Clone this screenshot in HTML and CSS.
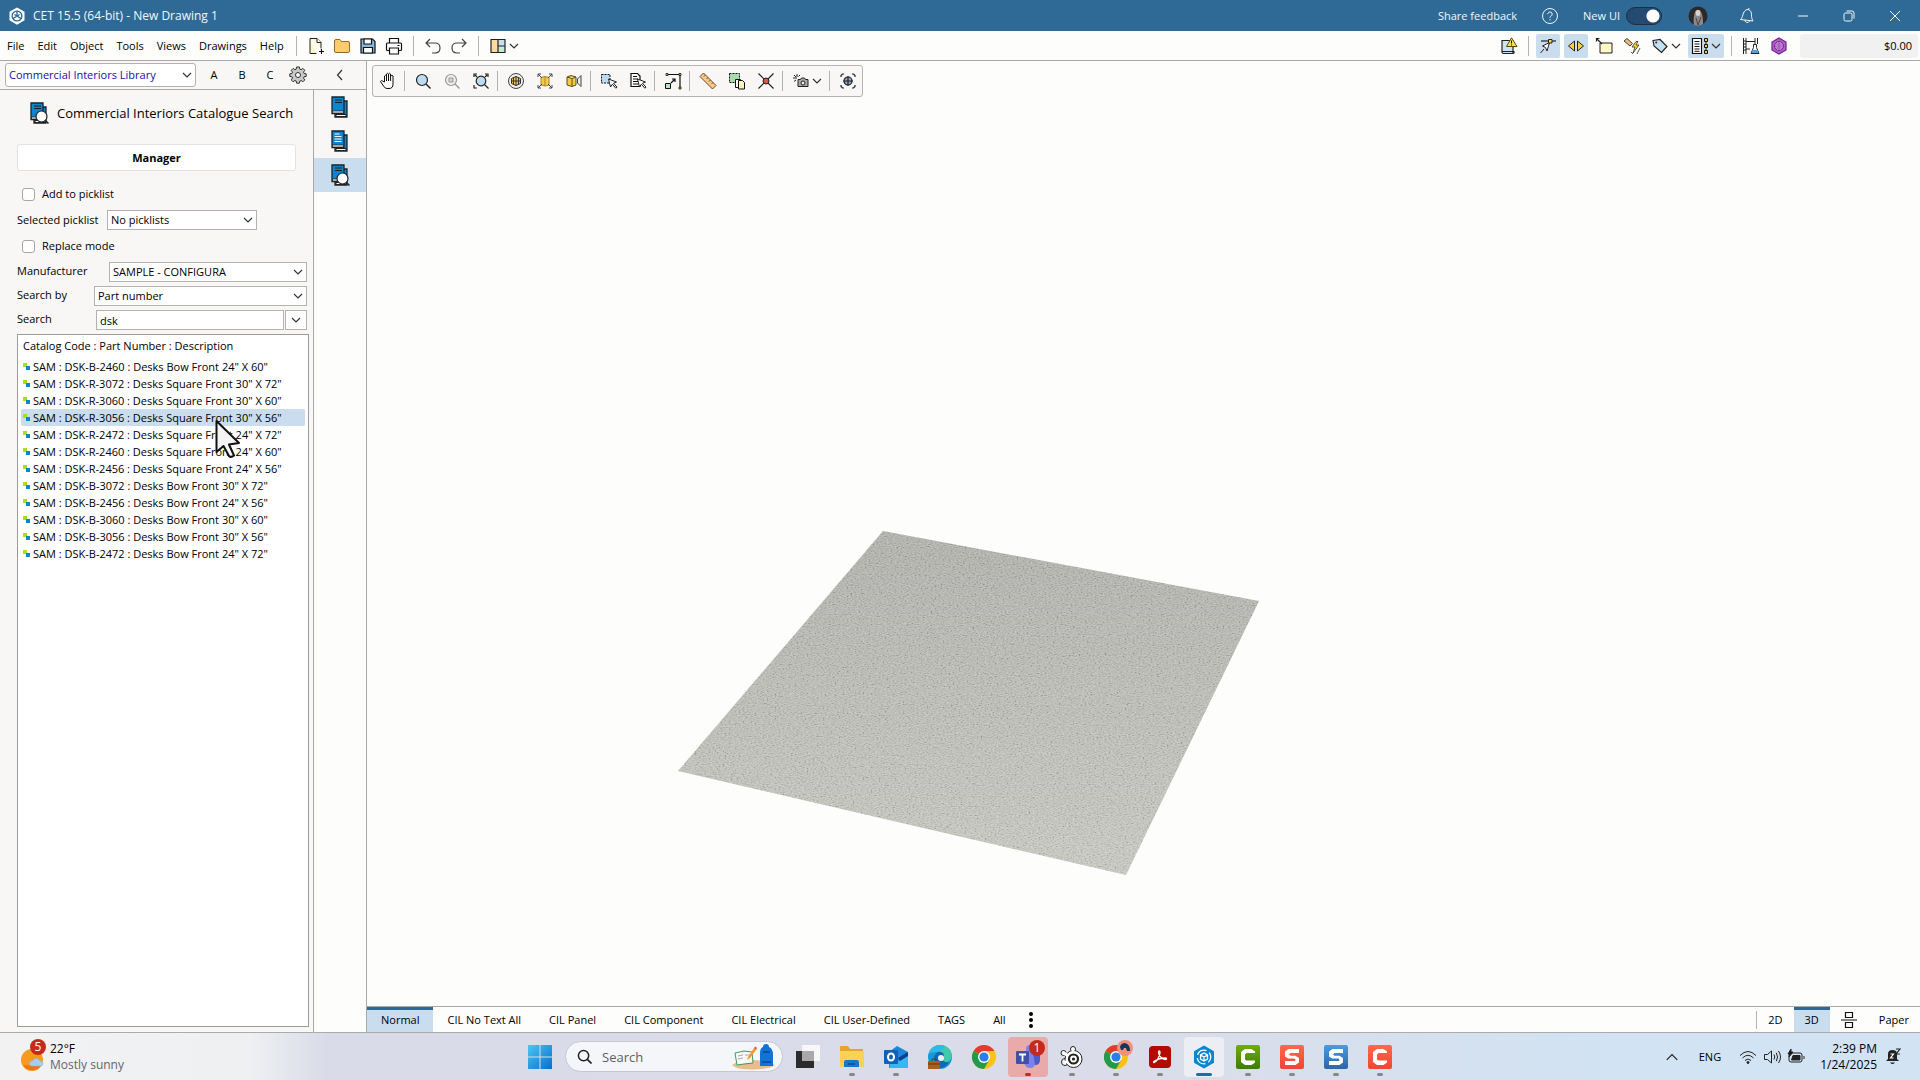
FILE: index.html
```html
<!DOCTYPE html>
<html lang="en">
<head>
  <meta charset="UTF-8" />
  <meta name="viewport" content="width=device-width, initial-scale=1.0"/>
  <title>CET 15.5 (64-bit) - New Drawing 1</title>
  <link rel="stylesheet" href="styles.css">
</head>
<body>
  <!-- shared icons -->
  <svg class="defs" aria-hidden="true">
    <symbol id="chevron" viewBox="0 0 10 10"><path d="M1 3l4 4 4-4" fill="none" stroke="#333" stroke-width="1.2"/></symbol>
    <symbol id="book" viewBox="0 0 24 24">
      <path d="M8 6h11v16H7v-3" fill="#0a86d1" stroke="#222" stroke-width="1.3"/>
      <path d="M8 19.500h10v2H8z" fill="#fff" stroke="#222" stroke-width="1"/>
      <path d="M4 2h12v16.500H4z" fill="#0a86d1" stroke="#222" stroke-width="1.3"/>
      <path d="M4.500 16h11v2h-11z" fill="#fff" stroke="#222" stroke-width="0.800"/>
    </symbol>
    <symbol id="book-search" viewBox="0 0 24 24">
      <use href="#book"/>
      <path d="M7 5h7M7 7.500h7" stroke="#122" stroke-width="1"/>
      <circle cx="14.500" cy="15.500" r="5.500" fill="#fff" stroke="#222" stroke-width="1.2"/>
      <path d="M18.500 19.500l3 3" stroke="#222" stroke-width="1.5"/>
    </symbol>
    <symbol id="item" viewBox="0 0 8 8"><path d="M0 0h4v4H0z" fill="#a8e010"/><path d="M3 3h4v4H3z" fill="#0a86d1"/></symbol>
    <symbol id="chrome" viewBox="0 0 24 24">
      <circle cx="12" cy="12" r="12" fill="#fbc116"/>
      <path d="M12 12L1.600 6A12 12 0 0 1 22.400 6H12z" fill="#e33b2e"/>
      <path d="M12 12L1.600 6A12 12 0 0 0 12 24l5.200-9z" fill="#229a4a"/>
      <circle cx="12" cy="12" r="6" fill="#fff"/><circle cx="12" cy="12" r="4.600" fill="#2b7de9"/>
    </symbol>
    <symbol id="cube" viewBox="0 0 24 24">
      <path d="M12 .5l10 5.700v11.600l-10 5.700-10-5.700V6.200z" fill="currentColor"/>
      <g fill="none" stroke="#fff" stroke-width="1.3"><circle cx="12" cy="12" r="6.800" stroke-dasharray="11 3.200" stroke-dashoffset="5"/><path d="M12 8l3.500 2v4L12 16l-3.500-2v-4zM8.500 10l3.500 2 3.500-2M12 12v4"/></g>
    </symbol>
    <symbol id="camtasia-c" viewBox="0 0 24 24"><path d="M19 6.500L15.500 4H9L5 7v10l4 3h6.500l3.500-2.500v-2H10.500L9 14.500v-5L10.500 8H19z" fill="#fff"/></symbol>
    <symbol id="snagit-s" viewBox="0 0 24 24"><path d="M19 4v4h-8.500L9 9.500l1.500 1.300h5L19 13v4.500L15.500 20H5v-4h9.500l1.200-1-1.200-1.500H8L5 11.500v-5L8.500 4z" fill="#fff"/></symbol>
  </svg>

  <header class="titlebar">
    <svg class="app-logo" viewBox="0 0 24 24"><path d="M12 .5l10 5.700v11.600l-10 5.700-10-5.700V6.200z" fill="#fff"/><g fill="none" stroke="#2f6a96" stroke-width="1.800"><circle cx="12" cy="12" r="6.500"/><path d="M12 5v7l-5.500 3.500M12 12l5.500 3.500M8.500 10l3.500 2 3.500-2"/></g></svg>
    <h1>CET 15.5 (64-bit) - New Drawing 1</h1>
    <div class="title-tools">
      <a href="#" class="feedback">Share feedback</a>
      <button class="help" aria-label="Help"><svg viewBox="0 0 18 18"><circle cx="9" cy="9" r="7.500"/><path d="M6.800 7.200a2.200 2.200 0 1 1 3.400 1.800c-.9.600-1.200.9-1.200 1.900M9 12.200v1.200"/></svg></button>
      <label class="new-ui">New UI <input type="checkbox" role="switch" checked></label>
      <button class="avatar" aria-label="Account"><svg viewBox="0 0 20 20"><circle cx="10" cy="10" r="9.500" fill="#2a2829"/><path d="M6 19c-1-5 0-10 1-13 1-3 5-3 6 0 2 4 2 8 2 12-3 2-6 2-9 1z" fill="#8d8988"/><ellipse cx="10" cy="7" rx="2.300" ry="3" fill="#d8d2cf"/><path d="M8 12l2 7 3-8" fill="none" stroke="#4a4646"/></svg></button>
      <button class="bell" aria-label="Notifications"><svg viewBox="0 0 18 18"><path d="M2.500 12.500c2-1.500 2-4 3-6.500s3.200-4 5.200-3.300 2.800 2.800 2.800 5c0 2 .2 4 1.500 6.300zM7 13c0 3 4 3.500 4.500.7M10.500 2.500l.5-1.500"/></svg></button>
      <button class="win" aria-label="Minimize"><svg viewBox="0 0 12 12"><path d="M1 6h10"/></svg></button>
      <button class="win" aria-label="Restore"><svg viewBox="0 0 12 12"><rect x="1" y="3" width="8" height="8" rx="1.500"/><path d="M3.500 1H9a2 2 0 0 1 2 2v5.500"/></svg></button>
      <button class="win" aria-label="Close"><svg viewBox="0 0 12 12"><path d="M1 1l10 10M11 1L1 11"/></svg></button>
    </div>
  </header>

  <div class="menubar">
    <nav class="menus">
      <button>File</button><button>Edit</button><button>Object</button><button>Tools</button><button>Views</button><button>Drawings</button><button>Help</button>
    </nav>
    <div class="file-tools">
      <span class="sep"></span>
      <button aria-label="New"><svg viewBox="0 0 18 18"><path d="M3 1.500h7l4 4v6M9.500 16.500H3v-15" fill="#fff6d0" stroke="#222"/><path d="M10 1.500v4h4" fill="#fff" stroke="#222"/><path d="M12 14.500h5M14.500 12v5" stroke="#111" stroke-width="1.200"/></svg></button>
      <button aria-label="Open"><svg viewBox="0 0 18 18"><path d="M1.500 4q0-1.500 1.500-1.500h4l1.500 2H15q1.500 0 1.500 1.500v8q0 1.500-1.500 1.500H3q-1.500 0-1.500-1.500z" fill="#ffcb6b" stroke="#96692a"/></svg></button>
      <button aria-label="Save"><svg viewBox="0 0 18 18"><path d="M2 2h11.500L16 4.500V16H2z" fill="#8ab8de" stroke="#111" stroke-width="1.200"/><path d="M5 2h7.500v5H5zM4.500 10.500h9V16h-9z" fill="#fff" stroke="#111" stroke-width="1.200"/></svg></button>
      <button aria-label="Print"><svg viewBox="0 0 18 18"><g fill="#fff" stroke="#111" stroke-width="1.200"><path d="M4.500 6V1.500h9V6"/><rect x="1.500" y="6" width="15" height="7.500" rx="1"/><path d="M4.500 11h9v6h-9zM12.500 8.500h2"/></g></svg></button>
      <span class="sep"></span>
      <button aria-label="Undo"><svg viewBox="0 0 18 18"><path d="M6 2L2 6l4 4M2 6h9q5 0 5 5t-5 5H8" fill="none" stroke="#444" stroke-width="1.200"/></svg></button>
      <button aria-label="Redo"><svg viewBox="0 0 18 18"><path d="M12 2l4 4-4 4M16 6H7q-5 0-5 5t5 5h3" fill="none" stroke="#444" stroke-width="1.200"/></svg></button>
      <span class="sep"></span>
      <button class="drop" aria-label="Layout"><svg viewBox="0 0 18 18"><path d="M2 2.500h7v13H2z" fill="#ffd9a0"/><path d="M9 2.500h7v6.500H9z" fill="#c8dff0"/><path d="M9 9h7v6.500H9z" fill="#c5ecd2"/><path d="M2 2.500h14v13H2zM9 2.500v13M9 9h7" fill="none" stroke="#222" stroke-width="1.200"/></svg><svg class="chev"><use href="#chevron"/></svg></button>
    </div>
    <div class="mode-tools">
      <button aria-label="Catalogue warnings"><svg viewBox="0 0 18 18"><path d="M2 3.500h11v13H3.500q-1.500 0-1.500-1.500zM2 14.500h12v2" fill="#cfe2f1" stroke="#222" stroke-width="1.200"/><path d="M11.500.8L17 9.500H6.500z" fill="#ffdf4f" stroke="#554a10"/><path d="M11.500 3.500v3M11.500 7.500v1" stroke="#111"/></svg></button>
      <span class="sep"></span>
      <button class="on" aria-label="Snap"><svg viewBox="0 0 18 18"><path d="M2 4h15" stroke="#222" stroke-width="1.200"/><path d="M1.500 16l3.500-4M3.500 9l7-3.500L8 14l-1.500-3.500z" fill="#fff" stroke="#222"/><path d="M9.500 2.500h3.500v3.500H9.500z" fill="#ffd34a" stroke="#222"/></svg></button>
      <button class="on" aria-label="Stretch"><svg viewBox="0 0 18 18"><path d="M7.500 4v10l-6-5zM10.500 4v10l6-5z" fill="#ffcf3a" stroke="#222"/></svg></button>
      <button aria-label="Note"><svg viewBox="0 0 18 18"><path d="M5 6h12v10H5z" fill="#fff8c8" stroke="#222"/><path d="M1.500 4.500v-3h3M1.500 1.500L7 7" fill="none" stroke="#222" stroke-width="1.200"/></svg></button>
      <button aria-label="Power"><svg viewBox="0 0 18 18"><path d="M1 4l3-2.500 5.500 5L7 9z" fill="#f0b97a" stroke="#444"/><path d="M13 4.500l-4 5.500h3l-2 6 6-8h-3l2-3.500zM8 15l2 2M17 11l-3 6" fill="#ffd22e" stroke="#333" stroke-width="0.800"/></svg></button>
      <button class="drop" aria-label="Tags"><svg viewBox="0 0 18 18"><path d="M2 3.500l7-1 7 7-5.500 6L3 9z" fill="#c5dff2" stroke="#222" stroke-width="1.200"/><circle cx="5.200" cy="5.500" r="1" fill="#222"/></svg><svg class="chev"><use href="#chevron"/></svg></button>
      <button class="drop on" aria-label="Tree list"><svg viewBox="0 0 18 18"><path d="M1.500 1.500h9v15h-9z" fill="#fff" stroke="#111" stroke-width="1.200"/><path d="M3.500 4.500h5M3.500 7h5M3.500 9.500h5M3.500 12h5M3.500 14.300h5" stroke="#111"/><path d="M15 2v14" stroke="#111"/><path d="M13.500 1.500h3v3h-3zM13.500 7.500h3v3h-3zM13.500 13.500h3v3h-3z" fill="#ffcf3a" stroke="#111"/></svg><svg class="chev"><use href="#chevron"/></svg></button>
      <span class="sep"></span>
      <button aria-label="Lab"><svg viewBox="0 0 18 18"><path d="M1.500 1v16M4 1v16M1.500 4h2.500M1.500 7h2.500M1.500 10h2.500M1.500 13h2.500M4 4.500h9M4 12h4M13 1v6M15.500 1v6" fill="none" stroke="#222"/><path d="M11.500 7.500h3v3l2.500 6H9l2.500-6z" fill="#fff" stroke="#222"/><path d="M10.500 13h5l1 3h-7z" fill="#5b9bd0"/></svg></button>
      <button aria-label="Material"><svg viewBox="0 0 18 18"><path d="M9 1l7 4v8l-7 4-7-4V5z" fill="#b45bd0" stroke="#6d2487" stroke-width="1.200"/><circle cx="9" cy="9" r="4.500" fill="#d7a4e6" stroke="#6d2487"/><path d="M9 4.500v9M4.500 9h9M5.500 7h7M5.500 11h7" stroke="#87409f" stroke-width="0.800"/></svg></button>
      <output class="price">$0.00</output>
    </div>
  </div>

  <main class="workspace">
    <aside class="sidebar">
      <div class="library-bar">
        <div class="pick library">
          <select aria-label="Library"><option>Commercial Interiors Library</option></select>
          <svg><use href="#chevron"/></svg>
        </div>
        <button>A</button><button>B</button><button>C</button>
        <button aria-label="Settings"><svg viewBox="0 0 18 18"><path d="M7.600 1h2.800l.4 2.200 1.300.5L14 2.400 15.800 4.300l-1.300 1.800.5 1.300 2.200.4v2.600l-2.200.4-.5 1.300 1.300 1.800-1.900 1.900-1.800-1.300-1.300.5-.4 2.200H7.600l-.4-2.200-1.300-.5-1.800 1.300-1.900-1.900 1.300-1.800-.5-1.300L.8 10.400V7.800L3 7.400l.5-1.300-1.300-1.800L4.100 2.400l1.800 1.300 1.300-.5z" fill="#c9c9c9" stroke="#333"/><circle cx="9" cy="9" r="2.500" fill="#fff" stroke="#333"/></svg></button>
        <button class="collapse" aria-label="Collapse"><svg viewBox="0 0 10 12"><path d="M7 1L2.500 6 7 11" fill="none" stroke="#333" stroke-width="1.200"/></svg></button>
      </div>
      <div class="sidebar-body">
        <section class="panel">
          <h2><svg><use href="#book-search"/></svg>Commercial Interiors Catalogue Search</h2>
          <button class="manager">Manager</button>
          <form class="search-form">
            <label class="check"><input type="checkbox">Add to picklist</label>
            <div class="field">
              <label for="picklist">Selected picklist</label>
              <div class="pick short"><select id="picklist"><option>No picklists</option></select><svg><use href="#chevron"/></svg></div>
            </div>
            <label class="check"><input type="checkbox">Replace mode</label>
            <div class="field">
              <label for="manufacturer" class="w-manufacturer">Manufacturer</label>
              <div class="pick"><select id="manufacturer"><option>SAMPLE - CONFIGURA</option></select><svg><use href="#chevron"/></svg></div>
            </div>
            <div class="field">
              <label for="search-by" class="w-by">Search by</label>
              <div class="pick"><select id="search-by"><option>Part number</option></select><svg><use href="#chevron"/></svg></div>
            </div>
            <div class="field">
              <label for="search" class="w-search">Search</label>
              <input type="text" id="search" value="dsk">
              <button type="button" class="history" aria-label="Search history"><svg><use href="#chevron"/></svg></button>
            </div>
          </form>
          <div class="results">
            <p>Catalog Code : Part Number : Description</p>
            <ul>
              <li><svg><use href="#item"/></svg>SAM : DSK-B-2460 : Desks Bow Front 24" X 60"</li>
              <li><svg><use href="#item"/></svg>SAM : DSK-R-3072 : Desks Square Front 30" X 72"</li>
              <li><svg><use href="#item"/></svg>SAM : DSK-R-3060 : Desks Square Front 30" X 60"</li>
              <li class="selected"><svg><use href="#item"/></svg>SAM : DSK-R-3056 : Desks Square Front 30" X 56"</li>
              <li><svg><use href="#item"/></svg>SAM : DSK-R-2472 : Desks Square Front 24" X 72"</li>
              <li><svg><use href="#item"/></svg>SAM : DSK-R-2460 : Desks Square Front 24" X 60"</li>
              <li><svg><use href="#item"/></svg>SAM : DSK-R-2456 : Desks Square Front 24" X 56"</li>
              <li><svg><use href="#item"/></svg>SAM : DSK-B-3072 : Desks Bow Front 30" X 72"</li>
              <li><svg><use href="#item"/></svg>SAM : DSK-B-2456 : Desks Bow Front 24" X 56"</li>
              <li><svg><use href="#item"/></svg>SAM : DSK-B-3060 : Desks Bow Front 30" X 60"</li>
              <li><svg><use href="#item"/></svg>SAM : DSK-B-3056 : Desks Bow Front 30" X 56"</li>
              <li><svg><use href="#item"/></svg>SAM : DSK-B-2472 : Desks Bow Front 24" X 72"</li>
            </ul>
            <svg class="pointer" viewBox="0 0 26 40"><path d="M1.500 2v31l7-6 5.500 10q2 2 5-.5l-5-11 10-1.500z" fill="#f4f4f4" stroke="#111" stroke-width="2" stroke-linejoin="round"/></svg>
          </div>
        </section>
        <nav class="rail">
          <button aria-label="Catalogues"><svg viewBox="0 0 24 24"><use href="#book"/><path d="M7 5h7M7 7.500h7" stroke="#122"/></svg></button>
          <button aria-label="Catalogue pages"><svg viewBox="0 0 24 24"><use href="#book"/><path d="M6.500 5h5M6.500 7.500h7M6.500 10h7M6.500 12.500h7" stroke="#fff"/></svg></button>
          <button class="on" aria-label="Catalogue search"><svg><use href="#book-search"/></svg></button>
        </nav>
      </div>
    </aside>

    <section class="view">
      <div class="canvas">
        <svg class="scene" viewBox="0 0 1553 945" preserveAspectRatio="xMinYMin slice" role="img" aria-label="Floor">
          <defs>
            <linearGradient id="floor" x1="0" y1="0" x2="0" y2="1"><stop offset="0" stop-color="#b0b1ab"/><stop offset="1" stop-color="#c9cac3"/></linearGradient>
            <clipPath id="floor-shape"><path d="M516 470l376 70-133 274-448-104z"/></clipPath>
            <filter id="weave" x="0" y="0" width="1" height="1"><feTurbulence type="fractalNoise" baseFrequency="0.5 0.9" numOctaves="2" seed="4"/><feColorMatrix values="2 0 0 0 -.45  2 0 0 0 -.45  2 0 0 0 -.45  0 0 0 0 1"/></filter>
          </defs>
          <g clip-path="url(#floor-shape)">
            <rect x="311" y="470" width="581" height="344" fill="url(#floor)"/>
            <rect x="311" y="470" width="581" height="344" filter="url(#weave)" opacity="0.180"/>
          </g>
        </svg>
        <div class="view-tools">
          <button aria-label="Pan"><svg viewBox="0 0 18 18"><path d="M5.500 10V4q1-1.500 2 0V2q1-1.500 2 0v0q1-1.500 2 0v2q1.500-1.500 2.500 0V12q0 4.500-4 4.500H8q-2 0-3.500-2.500L1.500 9.500q.5-1.500 2-.5zM7.500 4v5M9.500 2v7M11.600 3v6" fill="#fff" stroke="#111"/></svg></button>
          <span class="sep"></span>
          <button aria-label="Zoom"><svg viewBox="0 0 18 18"><circle cx="8" cy="8" r="5.500" fill="#bcdaf2" stroke="#222" stroke-width="1.200"/><path d="M12 12l4.500 4.500" stroke="#222" stroke-width="1.400"/></svg></button>
          <button disabled aria-label="Zoom selection"><svg viewBox="0 0 18 18"><circle cx="8" cy="8" r="5.500" fill="#eee" stroke="#999" stroke-width="1.200"/><path d="M6 6h4v4H6z" fill="#cfd8d0" stroke="#999"/><path d="M12 12l4.500 4.500" stroke="#999" stroke-width="1.400"/></svg></button>
          <button aria-label="Zoom extents"><svg viewBox="0 0 18 18"><circle cx="9" cy="9" r="4.800" fill="#bcdaf2" stroke="#222" stroke-width="1.200"/><path d="M12.500 12.500l4 4M2 5V2h3M13 2h3v3M2 13v3h3M3 3l2 2M15 3l-2 2" fill="none" stroke="#222" stroke-width="1.200"/></svg></button>
          <span class="sep"></span>
          <button aria-label="Orbit"><svg viewBox="0 0 18 18"><circle cx="9" cy="9" r="7.500" fill="#eee" stroke="#444"/><path d="M4.500 6.500l4.500-2 4.500 2v5l-4.500 2-4.500-2z" fill="#f7ca45" stroke="#333"/><path d="M9 4v10M4 9h10M6.500 5.500v7M11.500 5.500v7" stroke="#333"/></svg></button>
          <button aria-label="Fit view"><svg viewBox="0 0 18 18"><path d="M5 5.500l4-1 4 1V13l-4 1-4-1zM9 5v9" fill="#f7ca45" stroke="#a8872a"/><path d="M2 5V2h3M13 2h3v3M2 13v3h3M13 16h3v-3M2 2l4 4M16 2l-4 4M2 16l4-4M16 16l-4-4" fill="none" stroke="#444"/></svg></button>
          <button aria-label="Section view"><svg viewBox="0 0 18 18"><path d="M2 5l4-1.500L11 5v8l-4 1.500L2 13zM2 5l5 1.500L11 5M7 6.500v8" fill="#f7ca45" stroke="#5f4e1a"/><path d="M16 3.500v11l-3.500-3.500V7z" fill="#eee" stroke="#444"/></svg></button>
          <span class="sep"></span>
          <button aria-label="Select area"><svg viewBox="0 0 18 18"><path d="M1.500 2.500h8.500v8.500H1.500z" fill="#bcdaf2" stroke="#111" stroke-dasharray="2 1"/><path d="M8.500 7l8 3-3 1.200 3.500 4-1.200 1-3.500-4L10.500 15z" fill="#fff" stroke="#222"/></svg></button>
          <button aria-label="Select from list"><svg viewBox="0 0 18 18"><path d="M2 1.500h6.500L11 4v10.500H2z" fill="#fff" stroke="#111" stroke-width="1.200"/><path d="M4 4.500h4M4 7h5M4 9.500h5M4 12h5" stroke="#111"/><path d="M8.500 7l8 3-3 1.200 3.500 4-1.200 1-3.500-4L10.500 15z" fill="#fff" stroke="#222"/></svg></button>
          <span class="sep"></span>
          <button aria-label="Stretch"><svg viewBox="0 0 18 18"><path d="M3 2.500h13V16M7 11l4-4M8 7h3v3" fill="none" stroke="#111" stroke-width="1.200"/><path d="M1.500 11.500h5v5h-5z" fill="#b5e5c0" stroke="#111"/><path d="M2 1.500h2v2H2zM15 1.500h2v2h-2zM15 15h2v2h-2z" fill="#f7ca45" stroke="#111" stroke-width="0.800"/></svg></button>
          <span class="sep"></span>
          <button aria-label="Measure"><svg viewBox="0 0 18 18"><path d="M1 4.500L4.500 1 17 13.500 13.500 17z" fill="#f9c98b" stroke="#6b4a25"/><path d="M6.500 3L5 4.500M9 5.500L7.500 7M11.500 8L10 9.500M14 10.500L12.500 12" stroke="#6b4a25"/></svg></button>
          <button aria-label="Copy"><svg viewBox="0 0 18 18"><path d="M1.500 1.500h10v9h-10z" fill="#a6dcae" stroke="#111" stroke-dasharray="2 1"/><path d="M7.500 7.500h5v8h-5z" fill="#fff" stroke="#111"/><path d="M10.500 8.500h4l2 2V17h-6z" fill="#fff6b5" stroke="#111"/></svg></button>
          <button aria-label="Delete point"><svg viewBox="0 0 18 18"><path d="M1.500 1.500l15 15M16.500 1.500l-15 15" stroke="#222" stroke-width="1.200"/><circle cx="9" cy="9" r="3" fill="#d85443" stroke="#222"/></svg></button>
          <span class="sep"></span>
          <button class="drop" aria-label="Render"><svg viewBox="0 0 18 18"><path d="M6 7.500h2.500l1-1.500h3l1 1.500H16v7H6z" fill="#aaa" stroke="#222"/><circle cx="11" cy="11" r="2" fill="#eee" stroke="#222"/><path d="M5 2v3M2 3l2 2M8 3L6.500 4.500M1 6h4M2 9.500L4 8" stroke="#222"/></svg><svg class="chev"><use href="#chevron"/></svg></button>
          <span class="sep"></span>
          <button aria-label="Focus"><svg viewBox="0 0 18 18"><circle cx="9" cy="9" r="4" fill="#8fa7c0" stroke="#222" stroke-width="1.200"/><path d="M9 4v10M4 9h10M2 5V3.500L3.500 2H5M13 2h1.500L16 3.500V5M2 13v1.500L3.500 16H5M13 16h1.500l1.500-1.500V13" fill="none" stroke="#222" stroke-width="1.200"/></svg></button>
        </div>
      </div>
      <nav class="view-tabs">
        <button class="on">Normal</button><button>CIL No Text All</button><button>CIL Panel</button><button>CIL Component</button><button>CIL Electrical</button><button>CIL User-Defined</button><button>TAGS</button><button>All</button>
        <button class="more" aria-label="More"><svg viewBox="0 0 6 18"><circle cx="3" cy="3" r="2"/><circle cx="3" cy="9" r="2"/><circle cx="3" cy="15" r="2"/></svg></button>
        <div class="modes">
          <button>2D</button><button class="on">3D</button>
          <button class="split" aria-label="Split view"><svg viewBox="0 0 16 18"><path d="M0 9h16M4.500 1.500h7v5h-7zM4.500 11.500h7v5h-7z" fill="none" stroke="#111" stroke-width="1.200"/></svg></button>
          <button>Paper</button>
        </div>
      </nav>
    </section>
  </main>

  <footer class="taskbar">
    <button class="weather">
      <svg viewBox="0 0 28 28"><circle cx="12" cy="17" r="11" fill="#f59a1c"/><path d="M3 22a11 11 0 0 0 18 1z" fill="#f2750f"/><path d="M12 23q-3-.5-2.500-3t3-2q1-3 4-2.500t3.500 2.500q3 0 3 2.500T20.500 23z" fill="#a9cdf2" stroke="#8db5e2" stroke-width="0.600"/></svg>
      <span class="badge">5</span>
      <span class="weather-text"><b>22°F</b><i>Mostly sunny</i></span>
    </button>
    <div class="apps">
      <button class="start" aria-label="Start"><svg viewBox="0 0 24 24"><defs><linearGradient id="win" x1="0" y1="0" x2="1" y2="1"><stop offset="0" stop-color="#4bc6f2"/><stop offset="1" stop-color="#0570d0"/></linearGradient></defs><path d="M0 0h11.500v11.500H0zM12.500 0H24v11.500H12.500zM0 12.500h11.500V24H0zM12.500 12.500H24V24H12.500z" fill="url(#win)"/></svg></button>
      <label class="search">
        <svg viewBox="0 0 16 16"><circle cx="7" cy="7" r="5.500" fill="none" stroke="#222" stroke-width="1.600"/><path d="M11 11l4.500 4.500" stroke="#222" stroke-width="1.800"/></svg>
        <input type="text" placeholder="Search" aria-label="Search">
        <svg class="art" viewBox="0 0 44 26"><path d="M0 21q8-6 22-5t21 5q-4 4-21 4.500T0 21z" fill="#e9bd8b"/><path d="M3 9l9-2 8 1 1 11-9 1-7 1z" fill="#f8f8f8" stroke="#3d9a63"/><path d="M6 12l5-1M6 15l5-1M13 11l5 0" stroke="#aaa"/><path d="M22 4l-6 9-1 3 3-2 6-8z" fill="#f39a2b"/><path d="M22 4l2 2 1-2-1.500-1.500z" fill="#e3503c"/><path d="M28 22V9q0-5 3-6 0-3 3-3t3 3q3 1 4 6v13z" fill="#1272d6"/><path d="M31 8h7M30 18h9" stroke="#0a4797" stroke-width="1.500"/></svg>
      </label>
      <button class="app" aria-label="Task view"><svg viewBox="0 0 24 24"><path d="M0 6h18v17H0z" fill="#2b2b2b"/><path d="M6 0h18v16H6z" fill="#fafafa" opacity="0.900"/><path d="M6 6h12v10H6z" fill="#a9a9ab"/></svg></button>
      <button class="app running" aria-label="File Explorer"><svg viewBox="0 0 24 24"><path d="M0 2q0-1 1-1h7l2 3h13v5H0z" fill="#e5a526"/><path d="M0 6h24v15q0 1-1 1H1q-1 0-1-1z" fill="#fcd15a"/><path d="M4 22v-5q0-2 2-2h11q2 0 2 2v5z" fill="#1778c8"/><path d="M8 19h7" stroke="#0b4f94" stroke-width="1.500"/></svg></button>
      <button class="app running" aria-label="Outlook"><svg viewBox="0 0 24 24"><path d="M5 7l8-6 11 6v15q0 1-1 1H6q-1 0-1-1z" fill="#1c87d6"/><path d="M5 10l10 6 9-7v13q0 1-1 1H6z" fill="#35b8f1"/><path d="M14 13l10-6v4l-8 5z" fill="#0f3f8c"/><rect y="5" width="14" height="14" rx="1" fill="#0f62b9"/><ellipse cx="7" cy="12" rx="3" ry="3.500" fill="none" stroke="#fff" stroke-width="2"/></svg></button>
      <button class="app" aria-label="Edge"><svg viewBox="0 0 24 24"><circle cx="12" cy="12" r="12" fill="#1598d8"/><path d="M1 8C4 0 16-3 22 5c4 6 1 12-4 12-4 0-5-2-3-4 1-2-1-6-5-6-3 0-7 0-9 1z" fill="#42c9a9"/><path d="M1 8C3 1 11-2 17 1c-2 4-6 6-8 6s-6 0-8 1z" fill="#2fb9e6"/><path d="M6 12q2-6 7-5c4 1 3 5 2 6-1 2 1 5 6 4q-3 6-10 6-5-3-5-11z" fill="#1566b8"/><circle cx="13" cy="13" r="3" fill="#e9f3fa"/><path d="M0 16h12v8H0z" fill="#a85f1c"/><path d="M0 19h12M4 16v-2h4v2" fill="none" stroke="#6a3707"/></svg></button>
      <button class="app" aria-label="Chrome"><svg><use href="#chrome"/></svg></button>
      <button class="app alert running" aria-label="Teams"><svg viewBox="0 0 24 24"><circle cx="14" cy="4" r="4" fill="#7b83eb"/><path d="M8 8h12v9q-1 6-6 6t-6-6z" fill="#7b83eb"/><path d="M17 8h7v7q0 5-5 5z" fill="#5059c9"/><rect y="6" width="13" height="13" rx="1" fill="#4150a8"/><path d="M3 9.500h7M6.500 9.500v7" stroke="#fff" stroke-width="1.800"/></svg><span class="badge">1</span></button>
      <button class="app running" aria-label="SteelSeries"><svg viewBox="0 0 24 24"><g fill="#fff" stroke="#222"><circle cx="3.500" cy="8" r="2.500"/><circle cx="13" cy="4" r="2.500"/><circle cx="5" cy="17" r="3.500"/><circle cx="13.500" cy="14" r="8.500"/></g><path d="M4 8l4 3M13 4v4M5 17h4" stroke="#fff" stroke-width="3"/><circle cx="13.500" cy="14" r="4.500" fill="#fff" stroke="#222" stroke-width="2.200"/><circle cx="13.500" cy="14" r="1.600" fill="#222"/></svg></button>
      <button class="app running" aria-label="Chrome profile"><svg viewBox="0 0 24 24" overflow="visible"><use href="#chrome"/><circle cx="21" cy="3" r="8" fill="#f0917c"/><path d="M16 2q1-4 5-4 5 1 5 8h-3l-1-3-2 0-1 2h-2z" fill="#12365c"/></svg></button>
      <button class="app running" aria-label="Acrobat"><svg viewBox="0 0 24 24"><rect x="1" y="1" width="22" height="22" rx="4" fill="#b30b00"/><path d="M6 17.500c2 0 6-6 6-10 0-2-1.500-2-1.500 0 0 3 4 7 7 7 1.500 0 1.500-1.500-.5-1.500-4 0-8 1.500-10.500 3-1 .5-1 1.500-.5 1.500z" fill="none" stroke="#fff" stroke-width="1.300"/></svg></button>
      <button class="app active" aria-label="CET"><svg><use href="#cube"/></svg></button>
      <button class="app running green" aria-label="Camtasia"><svg><use href="#camtasia-c"/></svg></button>
      <button class="app running red" aria-label="Snagit"><svg><use href="#snagit-s"/></svg></button>
      <button class="app running blue" aria-label="Snagit Editor"><svg><use href="#snagit-s"/></svg></button>
      <button class="app running red" aria-label="Camtasia Recorder"><svg><use href="#camtasia-c"/></svg></button>
    </div>
    <div class="tray">
      <button aria-label="Show hidden icons"><svg class="up" viewBox="0 0 12 12"><path d="M1.500 8.500L6 4l4.500 4.500"/></svg></button>
      <span class="lang">ENG</span>
      <button class="status" aria-label="Network, sound and power">
        <svg viewBox="0 0 18 18"><path d="M1 7.500q8-8 16 0M3.500 10q5.500-5.500 11 0M6 12.500q3-3 6 0"/><circle cx="9" cy="14.500" r="1" fill="#222"/></svg>
        <svg viewBox="0 0 18 18"><path d="M1.500 6.500h3l4-3.500v12l-4-3.500h-3zM11 6.500q1.500 2.500 0 5M13.300 4.800q2.500 4.200 0 8.400M15.500 3q4 6 0 12"/></svg>
        <svg viewBox="0 0 18 18"><rect x="2" y="5" width="13" height="9" rx="2" /><path d="M6 7.500h7v4.500H4.500z" fill="#222"/><path d="M17 8v3"/><path d="M4 1L1 6h2L2 9l4-5H4z" fill="#111"/></svg>
      </button>
      <time datetime="2025-01-24T14:39"><span>2:39 PM</span><span>1/24/2025</span></time>
      <button aria-label="Do not disturb"><svg class="dnd" viewBox="0 0 16 18"><path d="M1 13l2-2V6q0-4 4.500-4T12 6v5l2 2zM5 14.500h5q-2.500 3-5 0z" fill="#222"/><path d="M5.500 6h3l-3 4h3" stroke="#fff" stroke-width="1.200"/><path d="M11 1h4l-4 5h4" stroke="#222" stroke-width="1.200"/></svg></button>
    </div>
  </footer>
</body>
</html>
```
FILE: styles.css
```css
* {
  box-sizing: border-box;
}

body {
  margin: 0;
  height: 100vh;
  display: flex;
  flex-direction: column;
  overflow: hidden;
  font-family: "Open Sans", "Noto Sans", sans-serif;
  font-size: 11px;
  line-height: 16px;
  color: #000;
  background: #fdfdfc;
}

button,
select,
input {
  margin: 0;
  padding: 0;
  border: none;
  background: none;
  font: inherit;
  color: inherit;
}

button {
  display: flex;
  align-items: center;
  justify-content: center;
  flex-shrink: 0;
  white-space: nowrap;
}

svg {
  display: block;
  flex-shrink: 0;
}

.defs {
  position: absolute;
  width: 0;
  height: 0;
}

.chev {
  width: 10px;
  height: 10px;
}

/* title bar */

.titlebar {
  display: flex;
  align-items: center;
  height: 31px;
  flex-shrink: 0;
  padding: 0 2px 0 8px;
  background: #2f6a96;
  color: #f2f6fa;
}

.app-logo {
  width: 18px;
  height: 18px;
}

.titlebar h1 {
  margin: 0 auto 0 7px;
  font-size: 12px;
  font-weight: 400;
}

.title-tools {
  display: flex;
  align-items: center;
}

.titlebar svg {
  fill: none;
  stroke: #f2f6fa;
}

.titlebar .app-logo,
.avatar svg {
  stroke: none;
}

.feedback {
  color: inherit;
  text-decoration: none;
  margin-right: 24px;
}

.help svg,
.bell svg {
  width: 18px;
  height: 18px;
}

.new-ui {
  display: flex;
  align-items: center;
  gap: 6px;
  margin-left: 24px;
}

.new-ui input {
  appearance: none;
  width: 36px;
  height: 18px;
  border: 1px solid #1b2f45;
  border-radius: 9px;
  background: radial-gradient(circle at 26px 8px, #fff 6px, transparent 7px) #254a72;
}

.avatar {
  margin: 0 30px 0 26px;
}

.avatar svg {
  width: 20px;
  height: 20px;
}

.bell {
  margin-right: 24px;
}

.win {
  width: 46px;
  height: 31px;
}

.win svg {
  width: 12px;
  height: 12px;
}

/* menu bar */

.menubar {
  display: flex;
  align-items: center;
  height: 30px;
  flex-shrink: 0;
  border-bottom: 1px solid #aaa9a9;
  background: #fdfdfc;
}

.menus {
  display: flex;
  gap: 13px;
  padding: 0 12px 0 7px;
}

.file-tools,
.mode-tools {
  display: flex;
  align-items: center;
}

.mode-tools {
  margin-left: auto;
  gap: 4px;
}

.sep {
  width: 1px;
  height: 20px;
  background: #b4b2b2;
}

.menubar .mode-tools .sep {
  margin: 0 3px;
}

.menubar .file-tools .sep {
  margin: 0 6px;
}

.menubar .file-tools .sep:first-child {
  margin-left: 0;
}

.file-tools button {
  width: 26px;
  height: 24px;
}

.menubar svg,
.view-tools svg {
  width: 18px;
  height: 18px;
}

.menubar .chev,
.view-tools .chev {
  width: 10px;
  height: 10px;
}

.file-tools .drop {
  width: 38px;
  gap: 2px;
}

.mode-tools button {
  width: 24px;
  height: 24px;
}

.mode-tools .drop {
  width: 36px;
  gap: 2px;
}

.mode-tools .on {
  background: #c9ddee;
  border-radius: 2px;
}

.price {
  width: 118px;
  margin: 0 2px 0 5px;
  padding: 4px 6px;
  border-radius: 3px;
  background: #f1f1f1;
  text-align: right;
}

/* sidebar */

.workspace {
  flex: 1;
  display: flex;
  min-height: 0;
}

.sidebar {
  width: 367px;
  display: flex;
  flex-direction: column;
  border-right: 1px solid #aaa9a9;
  background: #f8f7f6;
}

.library-bar {
  display: flex;
  align-items: center;
  height: 29px;
  padding-left: 5px;
  border-bottom: 1px solid #aaa9a9;
}

.library-bar button {
  width: 28px;
  height: 24px;
}

.library-bar button svg {
  width: 18px;
  height: 18px;
}

.library-bar .collapse {
  margin-left: 14px;
}

.library-bar .collapse svg {
  width: 10px;
  height: 12px;
}

/* a select with its own arrow laid over the right end */
.pick {
  display: grid;
  flex: 1;
  align-items: center;
}

.pick select,
.pick svg {
  grid-area: 1 / 1;
}

.pick select {
  appearance: none;
  width: 100%;
  height: 20px;
  padding: 0 20px 0 3px;
  border: 1px solid #b5b0b2;
  background: #fff;
}

.pick svg {
  justify-self: end;
  width: 10px;
  height: 10px;
  margin-right: 4px;
  pointer-events: none;
}

.library {
  flex: none;
  width: 191px;
  margin-right: 4px;
}

.library select {
  height: 24px;
  border-radius: 3px;
  color: #1a0da5;
}

.sidebar-body {
  flex: 1;
  display: flex;
  min-height: 0;
}

.panel {
  flex: 1;
  display: flex;
  flex-direction: column;
  padding: 10px 4px 5px 17px;
}

.panel h2 {
  display: flex;
  align-items: center;
  gap: 6px;
  margin: 0 0 18px 10px;
  font-size: 13px;
  font-weight: 400;
  line-height: 26px;
  white-space: nowrap;
}

.panel h2 svg {
  width: 24px;
  height: 24px;
}

.manager {
  height: 27px;
  margin: 0 13px 13px 0;
  border: 1px solid #e3e1e1;
  border-radius: 3px;
  background: #fff;
  font-weight: 700;
}

.search-form {
  display: flex;
  flex-direction: column;
  margin-right: 2px;
}

.check {
  display: flex;
  align-items: center;
  gap: 7px;
  height: 20px;
  padding-left: 5px;
}

.check input {
  appearance: none;
  width: 13px;
  height: 13px;
  border: 1px solid #a8a5a5;
  border-radius: 3px;
  background: #fff;
}

.field {
  display: flex;
  align-items: center;
  height: 24px;
}

.check + .field {
  margin-top: 4px;
}

.field + .check {
  margin-top: 4px;
}

.field label {
  width: 90px;
  white-space: nowrap;
}

.field .w-manufacturer,
.field .w-by,
.field .w-search {
  padding-bottom: 3px;
}

.field .w-manufacturer {
  width: 92px;
}

.field .w-by {
  width: 77px;
}

.field .w-search {
  width: 79px;
}

.pick.short {
  flex: none;
  width: 150px;
}

.field input {
  flex: 1;
  min-width: 0;
  height: 20px;
  padding: 0 3px;
  border: 1px solid #b5b0b2;
  background: #fff;
}

.history {
  width: 22px;
  height: 20px;
  margin-left: 1px;
  border: 1px solid #b5b0b2;
  background: #fff;
}

.history svg {
  width: 10px;
  height: 10px;
}

.results {
  position: relative;
  flex: 1;
  margin-top: 2px;
  border: 1px solid #9c9a9b;
  background: #fff;
  padding: 3px;
}

.results p {
  margin: 0 0 4px 2px;
}

.results ul {
  margin: 0;
  padding: 0;
  list-style: none;
}

.results li {
  display: flex;
  align-items: center;
  gap: 2px;
  height: 17px;
  padding-left: 2px;
  white-space: nowrap;
}

.results li svg {
  width: 8px;
  height: 8px;
}

.results .selected {
  background: #c9ddee;
  border-radius: 2px;
}

.pointer {
  position: absolute;
  left: 197px;
  top: 84px;
  width: 26px;
  height: 40px;
}

.rail {
  width: 53px;
  border-left: 1px solid #aaa9a9;
  background: #fdfdfc;
}

.rail button {
  width: 52px;
  height: 34px;
  background: #f8f7f6;
}

.rail button svg {
  width: 24px;
  height: 24px;
}

.rail .on {
  background: #c9ddee;
}

/* drawing view */

.view {
  flex: 1;
  min-width: 0;
  display: flex;
  flex-direction: column;
}

.canvas {
  flex: 1;
  min-height: 0;
  display: grid;
  align-items: start;
  justify-items: start;
}

.scene,
.view-tools {
  grid-area: 1 / 1;
}

.scene {
  width: 100%;
  height: 100%;
}

.view-tools {
  display: flex;
  align-items: center;
  height: 32px;
  margin: 4px 5px;
  border: 1px solid #b4b2b2;
  border-radius: 3px;
  background: #f8f7f6;
}

.view-tools button {
  width: 29px;
  height: 30px;
}

.view-tools .sep {
  margin: 0 3px 0 2px;
}

.view-tools .drop {
  width: 41px;
  gap: 2px;
}

.view-tabs {
  display: flex;
  height: 26px;
  border-top: 1px solid #aaa9a9;
}

.view-tabs button {
  padding: 0 14px;
  border-top: 3px solid transparent;
  border-bottom: 3px solid transparent;
}

.view-tabs .on {
  border-top-color: #2f6a96;
  border-bottom-color: #c9ddee;
  background: #c9ddee;
}

.view-tabs .more {
  padding: 0 8px;
}

.view-tabs .more svg {
  width: 6px;
  height: 18px;
}

.modes {
  display: flex;
  align-items: center;
  margin-left: auto;
}

.modes::before {
  content: "";
  width: 1px;
  height: 18px;
  background: #b4b2b2;
}

.view-tabs .modes button {
  height: 25px;
  padding: 0 11px;
}

.modes .split svg {
  width: 16px;
  height: 18px;
}

/* taskbar */

.taskbar {
  display: grid;
  grid-template-columns: 1fr auto 1fr;
  align-items: center;
  height: 48px;
  flex-shrink: 0;
  border-top: 1px solid #a9abad;
  background: linear-gradient(90deg, #f2f2f3 0, #eef0f2 13%, #d9dce8 17%, #dadde9 60%, #d2e3f3 84%, #d2e3f3 100%);
  font-size: 12px;
}

.weather {
  position: relative;
  justify-self: start;
  gap: 2px;
  padding-left: 20px;
}

.weather svg {
  width: 28px;
  height: 28px;
}

.weather-text {
  display: flex;
  flex-direction: column;
  text-align: left;
}

.weather-text b,
.weather-text i {
  font-weight: 400;
  font-style: normal;
}

.weather-text i {
  color: #666;
}

.badge {
  position: absolute;
  display: grid;
  place-items: center;
  width: 16px;
  height: 16px;
  border-radius: 50%;
  background: #c42b1c;
  color: #fff;
}

.weather .badge {
  left: 30px;
  top: -2px;
}

.apps {
  display: flex;
  align-items: center;
  padding-left: 10px;
}

.start {
  margin-right: 13px;
}

.start svg,
.app svg {
  width: 24px;
  height: 24px;
}

.search {
  display: flex;
  align-items: center;
  gap: 10px;
  width: 218px;
  height: 31px;
  margin-right: 3px;
  padding: 0 6px 0 11px;
  border: 1px solid #c6c8cf;
  border-radius: 16px;
  background: #f4f6f9;
}

.search svg {
  width: 15px;
  height: 15px;
}

.search input {
  flex: 1;
  min-width: 0;
  font-size: 13px;
}

.search input::placeholder {
  color: #5d5f63;
}

.search .art {
  width: 44px;
  height: 26px;
}

.app {
  position: relative;
  width: 40px;
  height: 40px;
  margin: 0 2px;
  border-radius: 4px;
}

.app.running::after,
.app.active::after {
  content: "";
  position: absolute;
  bottom: 1px;
  left: 17px;
  width: 6px;
  height: 3px;
  border-radius: 2px;
  background: #868789;
}

.app.active {
  background: #eceef3;
  color: #0a86d1;
}

.app.active::after {
  left: 12px;
  width: 16px;
  background: #1a6fa5;
}

.app.alert {
  background: #e8aba9;
}

.app.alert::after {
  background: #c42b1c;
}

.app .badge {
  right: 3px;
  top: 3px;
}

.green svg,
.red svg,
.blue svg {
  border-radius: 2px;
}

.green svg {
  background: linear-gradient(#6fae0a, #3d7d05);
}

.red svg {
  background: linear-gradient(#ff6a45, #f04438);
}

.blue svg {
  background: linear-gradient(#4a9be0, #2c66a8);
}

.tray {
  display: flex;
  align-items: center;
  justify-self: end;
  padding-right: 19px;
}

.tray svg {
  width: 18px;
  height: 18px;
  fill: none;
  stroke: #222;
}

.tray .up {
  width: 14px;
  height: 14px;
}

.lang {
  margin: 0 18px 0 20px;
  font-size: 11px;
}

.status {
  gap: 6px;
}

.tray time {
  display: flex;
  flex-direction: column;
  margin: 0 8px 0 15px;
  text-align: right;
}

.tray .dnd {
  width: 16px;
  stroke: none;
}
```
